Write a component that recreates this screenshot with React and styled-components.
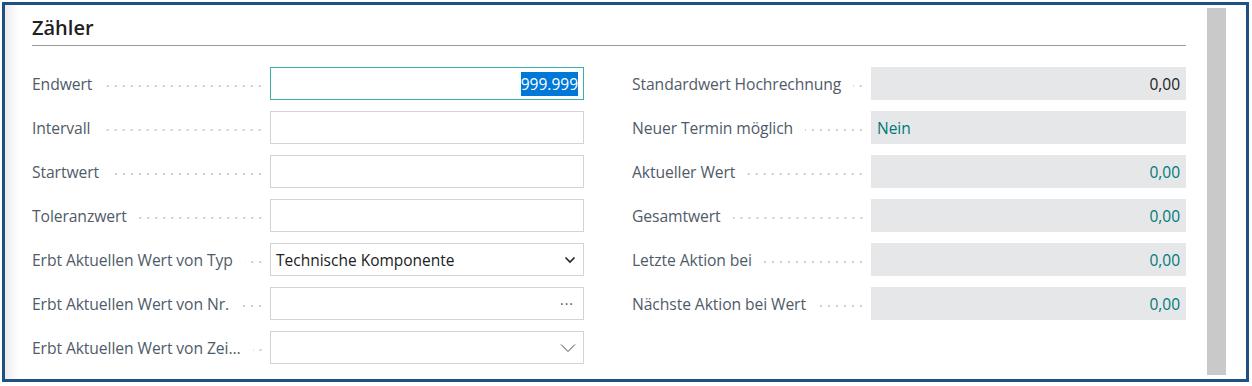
import React from 'react';
import styled, { createGlobalStyle } from 'styled-components';

const GlobalStyle = createGlobalStyle`
  html, body {
    margin: 0;
    padding: 0;
    background: #ffffff;
  }
  body {
    font-family: 'Open Sans', 'Noto Sans', sans-serif;
  }
`;

const Frame = styled.div`
  margin: 2px 0 0 2px;
  width: 1247px;
  height: 380px;
  box-sizing: border-box;
  border: 3px solid #1f4f85;
  display: flex;
  background: linear-gradient(to right, #ededed 0px, #ffffff 14px);
`;

const Content = styled.div`
  flex: 1;
  padding: 0 0 0 27px;
`;

const Heading = styled.h2`
  margin: 0;
  padding-top: 11px;
  padding-bottom: 5px;
  font-size: 20px;
  line-height: 24px;
  font-weight: 600;
  color: #212121;
  border-bottom: 1px solid #9a9a9a;
`;

const Columns = styled.div`
  display: flex;
  gap: 48px;
  padding-top: 21px;
`;

const Column = styled.div`
  display: flex;
  flex-direction: column;
  gap: 11px;
  width: ${p => p.$width}px;
`;

const Row = styled.div`
  display: flex;
  align-items: center;
  height: 33px;
`;

const Label = styled.div`
  width: ${p => p.$width}px;
  flex-shrink: 0;
  display: flex;
  align-items: center;
  padding-right: 6px;
  box-sizing: border-box;
  font-size: 15.7px;
  letter-spacing: -0.1px;
  color: #505b69;
  white-space: nowrap;
`;

const Leader = styled.span`
  flex: 1;
  height: 2px;
  margin: 4px 0 0 12px;
  background-image: radial-gradient(circle, #cdcdcd 0.8px, transparent 1.1px);
  background-size: 8px 2px;
  background-repeat: repeat-x;
  background-position: right center;
`;

const Input = styled.div`
  flex: 1;
  height: 33px;
  box-sizing: border-box;
  display: flex;
  align-items: center;
  justify-content: ${p => (p.$right ? 'flex-end' : 'space-between')};
  padding: 0 5px;
  border: 1px solid ${p => (p.$focused ? '#3aaea8' : '#d2d3d8')};
  background: #ffffff;
  font-size: 15.5px;
  color: #212121;
`;

const Selected = styled.span`
  background: #0078d7;
  color: #ffffff;
  padding: 1px 0;
`;

const ReadOnly = styled.div`
  flex: 1;
  height: 33px;
  box-sizing: border-box;
  display: flex;
  align-items: center;
  justify-content: ${p => (p.$right ? 'flex-end' : 'flex-start')};
  padding: 0 6px;
  background: #e6e7e9;
  font-size: 15.5px;
  color: ${p => (p.$teal ? '#00787a' : '#212121')};
`;

const Dots = styled.span`
  color: #555;
  font-size: 14px;
  letter-spacing: 1px;
  margin-left: auto;
  margin-right: 4px;
`;

const Scrollbar = styled.div`
  width: 19px;
  margin: 3px 20px 4px 21px;
  background: #c9c9c9;
`;

const Chevron = ({ thin }) =>
  thin ? (
    <svg width="16" height="10" viewBox="0 0 16 10" style={{ marginLeft: 'auto', marginRight: 2 }}>
      <path d="M1 1.5 L8 8.5 L15 1.5" fill="none" stroke="#444" strokeWidth="1" />
    </svg>
  ) : (
    <svg width="12" height="8" viewBox="0 0 12 8" style={{ marginLeft: 'auto', marginRight: 2 }}>
      <path d="M1.5 1.5 L6 6 L10.5 1.5" fill="none" stroke="#222" strokeWidth="1.6" />
    </svg>
  );

const left = [
  { label: 'Endwert', content: <Input $focused $right><Selected>999.999</Selected></Input> },
  { label: 'Intervall', content: <Input /> },
  { label: 'Startwert', content: <Input /> },
  { label: 'Toleranzwert', content: <Input /> },
  {
    label: 'Erbt Aktuellen Wert von Typ',
    content: (
      <Input>
        Technische Komponente
        <Chevron />
      </Input>
    ),
  },
  { label: 'Erbt Aktuellen Wert von Nr.', content: <Input><Dots>···</Dots></Input> },
  { label: 'Erbt Aktuellen Wert von Zei…', content: <Input><Chevron thin /></Input> },
];

const right = [
  { label: 'Standardwert Hochrechnung', value: '0,00', right: true },
  { label: 'Neuer Termin möglich', value: 'Nein', teal: true },
  { label: 'Aktueller Wert', value: '0,00', right: true, teal: true },
  { label: 'Gesamtwert', value: '0,00', right: true, teal: true },
  { label: 'Letzte Aktion bei', value: '0,00', right: true, teal: true },
  { label: 'Nächste Aktion bei Wert', value: '0,00', right: true, teal: true },
];

export default function App() {
  return (
    <>
      <GlobalStyle />
      <Frame>
        <Content>
          <Heading>Zähler</Heading>
          <Columns>
            <Column $width={552}>
              {left.map(r => (
                <Row key={r.label}>
                  <Label $width={238}>
                    {r.label}
                    <Leader />
                  </Label>
                  {r.content}
                </Row>
              ))}
            </Column>
            <Column $width={554}>
              {right.map(r => (
                <Row key={r.label}>
                  <Label $width={239}>
                    {r.label}
                    <Leader />
                  </Label>
                  <ReadOnly $right={r.right} $teal={r.teal}>{r.value}</ReadOnly>
                </Row>
              ))}
            </Column>
          </Columns>
        </Content>
        <Scrollbar />
      </Frame>
    </>
  );
}
